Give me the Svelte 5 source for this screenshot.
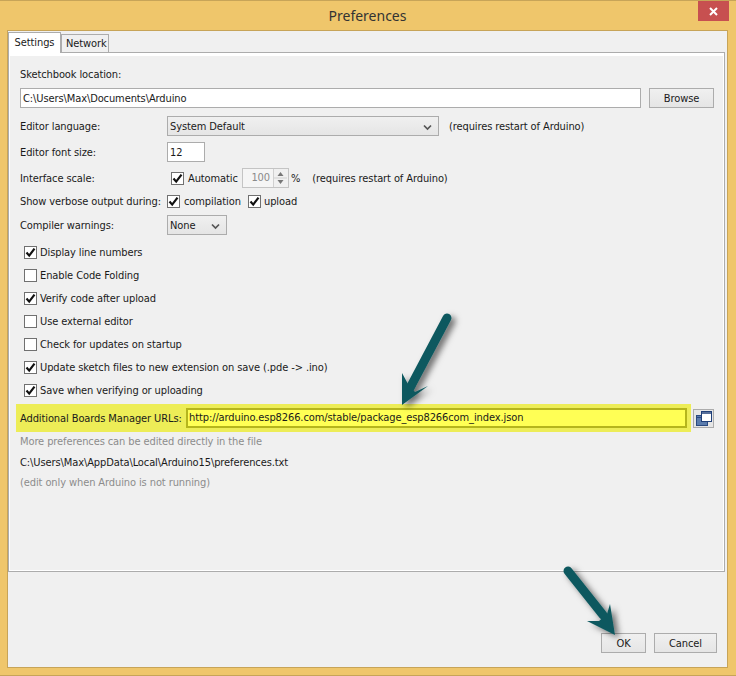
<script>
  const options = [
    { label: "Display line numbers", on: true },
    { label: "Enable Code Folding", on: false },
    { label: "Verify code after upload", on: true },
    { label: "Use external editor", on: false },
    { label: "Check for updates on startup", on: false },
    { label: "Update sketch files to new extension on save (.pde -> .ino)", on: true },
    { label: "Save when verifying or uploading", on: true }
  ];
</script>

{#snippet check(on)}
  <span class="check">
    {#if on}
      <svg width="11" height="11" viewBox="0 0 11 11"><path d="M1.5 5.5 L4.2 8.6 L9.5 1.6" fill="none" stroke="#111" stroke-width="2.2" /></svg>
    {/if}
  </span>
{/snippet}

{#snippet chevron()}
  <svg class="chev" width="9" height="7" viewBox="0 0 9 7"><path d="M1 1.5 L4.5 5 L8 1.5" fill="none" stroke="#555" stroke-width="1.7" /></svg>
{/snippet}

<div class="window">
  <header class="titlebar">
    <span class="title">Preferences</span>
    <div class="close">
      <svg width="9" height="9" viewBox="0 0 9 9"><path d="M1 1 L8 8 M8 1 L1 8" stroke="#fff" stroke-width="2" /></svg>
    </div>
  </header>

  <div class="content">
    <div class="tabs">
      <div class="tab active">Settings</div>
      <div class="tab">Network</div>
    </div>

    <section class="panel">
      <div class="label-row">Sketchbook location:</div>
      <div class="path-row">
        <div class="input grow">C:\Users\Max\Documents\Arduino</div>
        <button class="btn browse">Browse</button>
      </div>

      <div class="row lang">
        <span class="name">Editor language:</span>
        <div class="select language"><span>System Default</span>{@render chevron()}</div>
        <span class="note">(requires restart of Arduino)</span>
      </div>
      <div class="row size">
        <span class="name">Editor font size:</span>
        <div class="input small">12</div>
      </div>
      <div class="row scale">
        <span class="name">Interface scale:</span>
        <div class="scale-auto">
          {@render check(true)}<span class="auto">Automatic</span>
          <div class="spinner">
            <span class="value">100</span>
            <span class="arrows">
              <svg width="13" height="18" viewBox="0 0 13 18">
                <path d="M0 9 H13" stroke="#d0d0d0" />
                <path d="M6.5 3 L3.5 7 H9.5 Z M6.5 15 L3.5 11 H9.5 Z" fill="#777" />
              </svg>
            </span>
          </div>
          <span class="percent">%</span>
          <span class="note wide">(requires restart of Arduino)</span>
        </div>
      </div>
      <div class="row verbose">
        <span class="name">Show verbose output during:</span>
        <div class="verbose-opts">
          {@render check(true)}<span class="compilation">compilation</span>
          {@render check(true)}<span>upload</span>
        </div>
      </div>
      <div class="row warnings">
        <span class="name">Compiler warnings:</span>
        <div class="select none"><span>None</span>{@render chevron()}</div>
      </div>

      <ul class="options">
        {#each options as opt}
          <li>{@render check(opt.on)}<span>{opt.label}</span></li>
        {/each}
      </ul>

      <div class="boards">
        <div class="band">
          <span class="boards-label">Additional Boards Manager URLs:</span>
          <div class="url">http://arduino.esp8266.com/stable/package_esp8266com_index.json</div>
        </div>
        <button class="btn icon">
          <svg width="17" height="15" viewBox="0 0 17 15">
            <rect x="1.5" y="4.5" width="11" height="10" fill="#5b7cad" stroke="#2b4a80" />
            <path d="M1.5 6.5 H12.5" stroke="#2b4a80" />
            <rect x="6.5" y="0.5" width="10" height="10" fill="#fff" stroke="#1f3f78" />
            <path d="M6.5 2 H17" stroke="#1f3f78" stroke-width="1.5" />
          </svg>
        </button>
      </div>

      <p class="hint first">More preferences can be edited directly in the file</p>
      <p class="path">C:\Users\Max\AppData\Local\Arduino15\preferences.txt</p>
      <p class="hint">(edit only when Arduino is not running)</p>
    </section>

    <footer class="actions">
      <button class="btn ok">OK</button>
      <button class="btn cancel">Cancel</button>
    </footer>
  </div>

  <!-- annotation arrows drawn over the dialog -->
  <svg class="arrows-layer" width="736" height="676" viewBox="0 0 736 676">
    <defs>
      <filter id="sh" x="-40%" y="-40%" width="200%" height="200%">
        <feDropShadow dx="4" dy="3" stdDeviation="3" flood-color="#000" flood-opacity="0.55" />
      </filter>
    </defs>
    <g filter="url(#sh)" fill="#11595f">
      <path d="M447 317 L410 387" stroke="#11595f" stroke-width="9" stroke-linecap="round" />
      <path d="M402 404 L402 372 L408 383 L415 391 L428 385 Z" />
    </g>
    <g filter="url(#sh)" fill="#11595f">
      <path d="M568 570 L603 614" stroke="#11595f" stroke-width="9" stroke-linecap="round" />
      <path d="M615 634 L610 603 L607 613 L599 620 L587 620 Z" />
    </g>
  </svg>
</div>

<style>
  :global(body) {
    margin: 0;
    background: #efc66b;
  }

  .window {
    position: relative;
    width: 736px;
    height: 676px;
    box-sizing: border-box;
    border-top: 1px solid #c7a458;
    border-bottom: 1px solid #c7a458;
    background: #efc66b;
    font-family: "DejaVu Sans Condensed", Roboto, sans-serif;
    font-size: 11px;
    letter-spacing: -0.1px;
    color: #1a1a1a;
    overflow: hidden;
  }

  .titlebar {
    display: flex;
    justify-content: center;
    align-items: center;
    height: 29px;
    padding-bottom: 1px;
    box-sizing: border-box;
  }

  .title {
    font-family: "Noto Sans", sans-serif;
    font-size: 14px;
    letter-spacing: 0;
    color: #333;
    margin-right: 1px;
  }

  .close {
    position: absolute;
    top: 0;
    left: 698px;
    width: 31px;
    height: 20px;
    background: #c75050;
    display: flex;
    align-items: center;
    justify-content: center;
  }

  .content {
    margin-left: 7px;
    width: 721px;
    height: 638px;
    box-sizing: border-box;
    border: 1px solid #c7a458;
    background: #f0f0f0;
    padding: 1px 2px 0 0;
    display: flex;
    flex-direction: column;
  }

  .tabs {
    display: flex;
    align-items: flex-end;
    height: 20px;
    position: relative;
    z-index: 1;
  }

  .tab {
    box-sizing: border-box;
    height: 18px;
    padding: 0 4px;
    width: 48px;
    line-height: 17px;
    border: 1px solid #acacac;
    border-bottom: 0;
    background: #f0f0f0;
    text-align: center;
  }

  .tab.active {
    width: 53px;
    height: 21px;
    line-height: 19px;
    background: #fff;
    margin-bottom: -1px;
  }

  .panel {
    box-sizing: border-box;
    height: 520px;
    border: 1px solid #acacac;
    box-shadow: inset 0 3px 0 #fff, inset 1px 0 0 #fff, inset -1px -1px 0 #fff;
    padding: 13px 9px 0 11px;
    display: flex;
    flex-direction: column;
  }

  .label-row {
    height: 17px;
    line-height: 17px;
  }

  .path-row {
    display: flex;
    gap: 8px;
    margin-top: 5px;
    height: 20px;
  }

  .input {
    box-sizing: border-box;
    background: #fff;
    border: 1px solid #acacac;
    height: 20px;
    line-height: 19px;
    padding: 0 2px;
  }

  .grow {
    width: 621px;
  }

  .btn {
    box-sizing: border-box;
    border: 1px solid #acacac;
    background: linear-gradient(#f0f0f0, #e5e5e5);
    font: inherit;
    letter-spacing: inherit;
    color: inherit;
    padding: 0;
    height: 20px;
    display: flex;
    align-items: center;
    justify-content: center;
  }

  .browse {
    width: 65px;
  }

  .row {
    display: flex;
    align-items: center;
    height: 20px;
  }

  .name {
    width: 147px;
    flex: none;
    white-space: nowrap;
  }

  .lang { margin-top: 8px; }
  .size { margin-top: 6px; }
  .scale { margin-top: 6px; }
  .verbose { margin-top: 3px; }
  .warnings { margin-top: 4px; }

  .select {
    box-sizing: border-box;
    height: 20px;
    border: 1px solid #acacac;
    background: linear-gradient(#f0f0f0, #e5e5e5);
    display: flex;
    align-items: center;
    justify-content: space-between;
    padding: 0 6px 0 2px;
  }

  .language {
    width: 272px;
  }

  .none {
    width: 60px;
  }

  .note {
    margin-left: 10px;
  }

  .chev {
    flex: none;
    margin-top: 2px;
  }

  .small {
    width: 38px;
  }

  .check {
    box-sizing: border-box;
    display: inline-flex;
    align-items: center;
    justify-content: center;
    flex: none;
    width: 13px;
    height: 13px;
    border: 1px solid #707070;
    background: #fff;
  }

  .scale-auto,
  .verbose-opts {
    display: flex;
    align-items: center;
  }

  .scale-auto {
    margin-left: 4px;
  }

  .auto {
    width: 54px;
    margin-left: 4px;
  }

  .compilation {
    width: 64px;
    margin-left: 4px;
  }

  .verbose-opts > span:last-child {
    margin-left: 3px;
  }

  .spinner {
    box-sizing: border-box;
    display: flex;
    width: 47px;
    height: 20px;
    border: 1px solid #c4c4c4;
    background: #f0f0f0;
    color: #8a8a8a;
  }

  .value {
    flex: 1;
    text-align: right;
    padding-right: 3px;
    line-height: 18px;
    background: #f5f5f5;
  }

  .arrows {
    display: block;
    width: 14px;
    border-left: 1px solid #d0d0d0;
  }

  .percent {
    margin-left: 2px;
  }

  .wide {
    margin-left: 12px;
  }

  .options {
    list-style: none;
    margin: 6px 0 0 4px;
    padding: 0;
  }

  .options li {
    display: flex;
    align-items: center;
    gap: 3px;
    height: 23px;
  }

  .boards {
    display: flex;
    align-items: center;
    gap: 2px;
    margin: 2px 0 0 -4px;
    height: 28px;
  }

  .band {
    box-sizing: border-box;
    display: flex;
    align-items: center;
    width: 675px;
    height: 28px;
    padding: 0 4px;
    background: #eded57;
  }

  .boards-label {
    width: 166px;
    flex: none;
    white-space: nowrap;
  }

  .url {
    box-sizing: border-box;
    flex: 1;
    height: 20px;
    line-height: 16px;
    padding: 0 1px;
    border: 2px solid #b5b51c;
    background: #ffff55;
  }

  .icon {
    width: 21px;
    height: 19px;
    background: #e6e6e6;
  }

  p {
    margin: 0;
    height: 21px;
    line-height: 21px;
  }

  .hint {
    color: #8c8c8c;
  }

  .first {
    margin-top: -1px;
  }

  .path {
    height: 20px;
  }

  .actions {
    display: flex;
    justify-content: flex-end;
    gap: 8px;
    margin-top: 61px;
    padding-right: 8px;
  }

  .ok {
    width: 45px;
  }

  .cancel {
    width: 63px;
  }

  .arrows-layer {
    position: absolute;
    inset: 0;
    pointer-events: none;
  }
</style>
